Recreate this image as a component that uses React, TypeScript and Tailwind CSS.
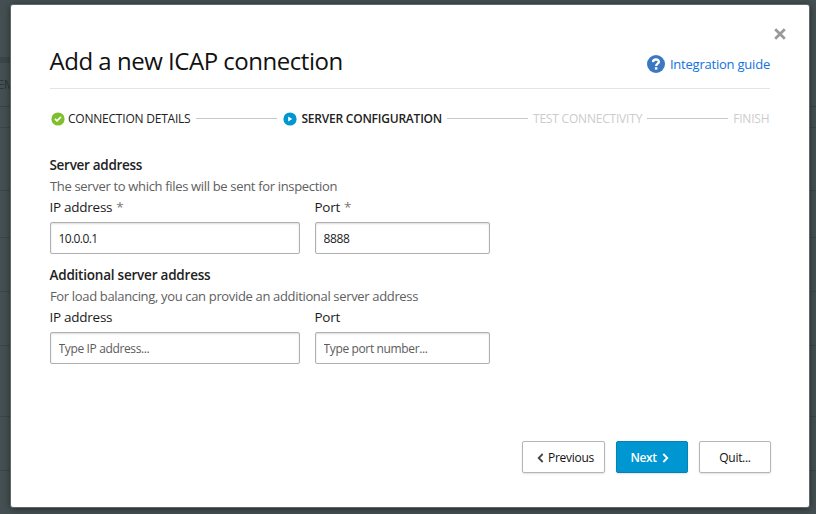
import type { ReactNode } from 'react';

function CheckIcon() {
  return (
    <svg viewBox="0 0 14 14" className="size-[14px] shrink-0">
      <circle cx="7" cy="7" r="6.6" fill="#7fbe2c" />
      <path d="M3.9 6.9 6 8.9 10 4.9" fill="none" stroke="#fff" strokeWidth="1.7" />
    </svg>
  );
}

function PlayIcon() {
  return (
    <svg viewBox="0 0 14 14" className="size-[14px] shrink-0">
      <circle cx="7" cy="7" r="6.6" fill="#0096d2" />
      <path d="M5.2 4.4 9.3 7 5.2 9.6Z" fill="#fff" />
    </svg>
  );
}

function HelpIcon() {
  return (
    <svg viewBox="0 0 18 18" className="size-[18px] shrink-0">
      <circle cx="9" cy="9" r="9" fill="#3a78c3" />
      <path d="M6 7.1C6.1 5.2 7.2 4.5 9 4.5s2.9.9 2.9 2.3c0 1.9-2.7 1.8-2.7 4.1" fill="none" stroke="#fff" strokeWidth="2.4" />
      <rect x="7.9" y="12.2" width="2.5" height="2.4" fill="#fff" />
    </svg>
  );
}

function CloseIcon() {
  return (
    <svg viewBox="0 0 12 12" className="size-3">
      <path d="M1.2 1.2 10.8 10.8M10.8 1.2 1.2 10.8" stroke="#999" strokeWidth="2.7" />
    </svg>
  );
}

function Chevron({ left = false, color }: { left?: boolean; color: string }) {
  return (
    <svg viewBox="0 0 7 10" className="h-[10px] w-[7px] shrink-0">
      <path d={left ? 'M5.7 1 1.7 5l4 4' : 'M1.3 1l4 4-4 4'} fill="none" stroke={color} strokeWidth="1.8" />
    </svg>
  );
}

function StepLine() {
  return <div className="h-px flex-1 bg-[#c8c8c8]" />;
}

type FieldProps = { label: string; required?: boolean; value?: string; placeholder?: string; width: string; valueClass?: string };

function Field({ label, required, value, placeholder, width, valueClass = '' }: FieldProps) {
  return (
    <label className={`block ${width}`}>
      <span className="-ml-[0.5px] block h-[25px] text-[13.5px] leading-[20px] tracking-[-0.26px] text-[#1c1c1c]">
        {label}
        {required && <span className="ml-[4px] text-[#777]">*</span>}
      </span>
      <input
        defaultValue={value}
        placeholder={placeholder}
        className={`block h-8 w-full rounded-[2px] border border-[#b0b0b0] bg-white px-[7.5px] text-[12px] text-[#1c1c1c] shadow-[inset_0_1px_2px_rgba(0,0,0,0.14)] outline-none placeholder:text-[#5c5c5c] placeholder:opacity-100 ${valueClass}`}
      />
    </label>
  );
}

function Section({ title, titleClass, hint, hintClass, children }: { title: string; titleClass: string; hint: string; hintClass: string; children: ReactNode }) {
  return (
    <section className="h-[110px]">
      <h2 className={`-ml-[0.5px] h-[21px] text-[13.5px] leading-[20px] font-semibold text-[#222] ${titleClass}`}>{title}</h2>
      <p className={`h-[21px] text-[13px] leading-[20px] text-[#606060] ${hintClass}`}>{hint}</p>
      <div className="flex gap-[15px]">{children}</div>
    </section>
  );
}

function Backdrop() {
  return (
    <div className="absolute inset-0 flex flex-col overflow-hidden bg-[#444f51]">
      <div className="flex h-[63px] w-[11px] shrink-0 items-end">
        <div className="h-[6px] w-full bg-[#3c4648]" />
      </div>
      <div className="h-[44px] shrink-0 border-b border-[#384345] pt-[11px] text-[13px] leading-[20px] tracking-[-0.5px] text-[#2b3638]">
        <span className="-ml-[3px]">EM</span>
      </div>
      <div className="h-[21px] shrink-0 border-b border-[#3a4547]" />
      <div className="h-[63px] shrink-0 border-b border-[#3a4547]" />
      <div className="h-[47px] shrink-0 border-b border-[#3a4547]" />
      <div className="h-[54px] shrink-0 border-b border-[#3a4547]" />
      <div className="h-[54px] shrink-0 border-b border-[#3a4547]" />
      <div className="h-[71px] shrink-0 border-b border-[#3a4547]" />
      <div className="h-[54px] shrink-0 border-b border-[#3a4547]" />
    </div>
  );
}

export default function App() {
  return (
    <div className="relative h-[514px] w-[816px] overflow-hidden pt-[5px] pl-[11px] whitespace-nowrap [font-family:'Open_Sans','Noto_Sans',sans-serif]">
      <Backdrop />
      <main className="relative flex h-[502px] w-[798px] flex-col rounded-[2px] bg-white pr-[39px] pl-[39px] shadow-[0_0_0_1px_#60686a,0_1px_7px_rgba(0,0,0,0.6)]">
        <div className="-mr-[16px] flex h-[45px] shrink-0 justify-end pt-[23px]">
          <button aria-label="Close" className="size-3"><CloseIcon /></button>
        </div>
        <header className="flex h-[39px] shrink-0 justify-between border-b border-[#e4e4e4]">
          <h1 className="-mt-px -ml-[0.5px] text-[24px] leading-[24px] tracking-[-0.48px] text-[#111]">Add a new ICAP connection</h1>
          <a className="flex h-[28px] items-center gap-[5px] text-[13px] tracking-[-0.22px] text-[#1272de]">
            <HelpIcon />
            <span className="pt-px">Integration guide</span>
          </a>
        </header>
        <nav className="flex h-[59px] shrink-0 items-center text-[12px] text-[#222]">
          <div className="ml-[1px] flex items-center gap-[3px]"><CheckIcon /><span className="tracking-[-0.22px]">CONNECTION DETAILS</span></div>
          <div className="flex w-[93px] px-[6px]"><StepLine /></div>
          <div className="flex items-center gap-[4px] font-semibold"><PlayIcon /><span className="tracking-[-0.22px]">SERVER CONFIGURATION</span></div>
          <div className="flex w-[91px] px-[5px]"><StepLine /></div>
          <span className="font-medium tracking-[-0.2px] text-[#ccc]">TEST CONNECTIVITY</span>
          <div className="flex w-[91px] px-[5px]"><StepLine /></div>
          <span className="font-medium tracking-[-0.2px] text-[#ccc]">FINISH</span>
        </nav>
        <form className="pt-[7px]">
          <Section title="Server address" titleClass="tracking-[-0.3px]" hint="The server to which files will be sent for inspection" hintClass="tracking-[-0.33px]">
            <Field label="IP address" required value="10.0.0.1" width="w-[250px]" valueClass="tracking-[-0.6px]" />
            <Field label="Port" required value="8888" width="w-[175px]" valueClass="tracking-[-0.4px]" />
          </Section>
          <Section title="Additional server address" titleClass="tracking-[-0.22px]" hint="For load balancing, you can provide an additional server address" hintClass="tracking-[-0.34px]">
            <Field label="IP address" placeholder="Type IP address..." width="w-[250px]" valueClass="tracking-[-0.36px]" />
            <Field label="Port" placeholder="Type port number..." width="w-[175px]" valueClass="tracking-[-0.36px]" />
          </Section>
        </form>
        <footer className="mt-auto -mr-[1px] mb-[34px] flex justify-end gap-[11px] text-[12px] text-[#111]">
          <button className="flex h-8 w-[83px] items-center justify-center gap-[4px] rounded-[2px] border border-[#b5b5b5] pt-px pl-[4px] tracking-[-0.3px] shadow-[0_1px_2px_rgba(0,0,0,0.12)]">
            <Chevron left color="#444" />
            <span>Previous</span>
          </button>
          <button className="flex h-8 w-[72px] items-center justify-center gap-[5px] rounded-[2px] border border-[#0582b4] bg-[#0096d2] pt-px pr-[5px] font-semibold tracking-[-0.4px] text-white shadow-[0_1px_2px_rgba(0,0,0,0.12)]">
            <span>Next</span>
            <Chevron color="#fff" />
          </button>
          <button className="h-8 w-[72px] rounded-[2px] border border-[#b5b5b5] pt-px tracking-[-0.3px] shadow-[0_1px_2px_rgba(0,0,0,0.12)]">Quit...</button>
        </footer>
      </main>
    </div>
  );
}
